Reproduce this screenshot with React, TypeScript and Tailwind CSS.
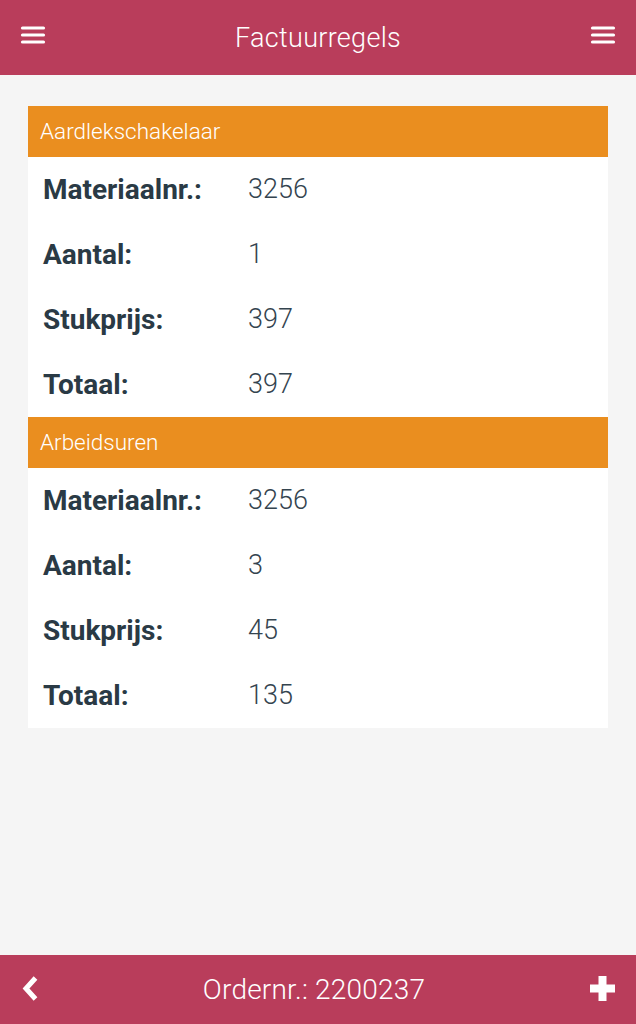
import React from "react";

type Row = { label: string; value: string };
type Section = { title: string; rows: Row[] };

const sections: Section[] = [
  {
    title: "Aardlekschakelaar",
    rows: [
      { label: "Materiaalnr.:", value: "3256" },
      { label: "Aantal:", value: "1" },
      { label: "Stukprijs:", value: "397" },
      { label: "Totaal:", value: "397" },
    ],
  },
  {
    title: "Arbeidsuren",
    rows: [
      { label: "Materiaalnr.:", value: "3256" },
      { label: "Aantal:", value: "3" },
      { label: "Stukprijs:", value: "45" },
      { label: "Totaal:", value: "135" },
    ],
  },
];

function Hamburger() {
  return (
    <svg width="26" height="20" viewBox="0 0 26 20" fill="none" className="mb-[3px]">
      <line x1="2.5" y1="2" x2="23.5" y2="2" stroke="white" strokeWidth="3.2" strokeLinecap="round" />
      <line x1="2.5" y1="9" x2="23.5" y2="9" stroke="white" strokeWidth="3.2" strokeLinecap="round" />
      <line x1="2.5" y1="16" x2="23.5" y2="16" stroke="white" strokeWidth="3.2" strokeLinecap="round" />
    </svg>
  );
}

function Chevron() {
  return (
    <svg width="16" height="26" viewBox="0 0 16 26" fill="none" className="mb-[2px]">
      <path d="M13.5 2 L4 12.5 L13.5 23" stroke="white" strokeWidth="5" strokeLinecap="butt" strokeLinejoin="miter" />
    </svg>
  );
}

function Plus() {
  return (
    <svg width="25" height="25" viewBox="0 0 25 25" className="mb-[2px]">
      <rect x="8.5" y="0" width="8" height="25" fill="white" />
      <rect x="0" y="8.5" width="25" height="8" fill="white" />
    </svg>
  );
}

export default function App() {
  return (
    <div
      className="w-[636px] h-[1024px] flex flex-col bg-[#f5f5f5]"
      style={{ fontFamily: "Roboto, 'Noto Sans', sans-serif" }}
    >
      <header className="h-[75px] shrink-0 bg-[#b93d5b] flex items-center justify-between pl-[20px] pr-[20px]">
        <Hamburger />
        <h1 className="text-white text-[27px] font-light tracking-[0.3px] leading-none mt-[1px]">Factuurregels</h1>
        <Hamburger />
      </header>

      <main className="flex-1 pt-[31px] px-[28px]">
        <div className="w-[580px] bg-white">
          {sections.map((s) => (
            <div key={s.title}>
              <div className="h-[51px] bg-[#ea8e1f] flex items-center pl-[12px] text-white text-[22.5px] font-light">
                {s.title}
              </div>
              {s.rows.map((r) => (
                <div key={r.label} className="h-[65px] flex items-center pl-[15px]">
                  <span className="w-[205px] text-[28px] font-bold text-[#2a3a45]">{r.label}</span>
                  <span className="text-[27px] font-light text-[#34444f]">{r.value}</span>
                </div>
              ))}
            </div>
          ))}
        </div>
      </main>

      <footer className="h-[69px] shrink-0 bg-[#b93d5b] flex items-center justify-between pl-[22px] pr-[21px]">
        <Chevron />
        <span className="text-white text-[28px] font-light leading-none tracking-[0.2px]">Ordernr.: 2200237</span>
        <Plus />
      </footer>
    </div>
  );
}
